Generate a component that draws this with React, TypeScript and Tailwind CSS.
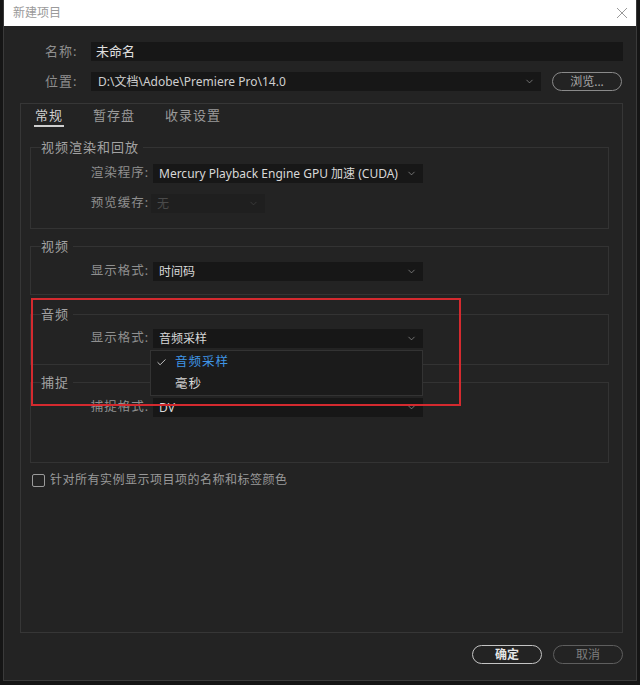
import { ChevronDown, Check } from "lucide-react";

const font = "font-['Noto_Sans','Noto_Sans_CJK_SC',sans-serif]";

const Dropdown = ({ value, width = "w-[270px]", dim = false }: { value: string; width?: string; dim?: boolean }) => (
    <div className={`${width} h-[19px] flex flex-row items-center justify-between pl-[6px] pr-[6px] ${dim ? "bg-[#1f1f1f]" : "bg-[#171717]"}`}>
        <span className={`text-[12px] leading-none ${dim ? "text-[#4a4a4a]" : "text-[#d8d8d8]"}`}>{value}</span>
        <ChevronDown size={11} strokeWidth={1.5} className={dim ? "text-[#444]" : "text-[#9a9a9a]"} />
    </div>
);

const Row = ({ label, children }: { label: string; children: React.ReactNode }) => (
    <div className="flex flex-row items-center gap-[4px]">
        <label className="w-[108px] text-right text-[12.5px] text-[#8f8f8f] tracking-[1px]">{label}</label>
        {children}
    </div>
);

const Section = ({ title, className, children }: { title: string; className: string; children: React.ReactNode }) => (
    <fieldset className={`border border-[#333333] px-[10px] ${className}`}>
        <legend className="text-[13px] leading-[16px] text-[#a2a2a2] pr-[4px] tracking-[1px]">{title}</legend>
        <div className="flex flex-col gap-[11px]">{children}</div>
    </fieldset>
);

const App = () => {
    return (
        <div className={`relative w-[640px] h-[685px] bg-[#151515] ${font}`}>
            <div className="ml-[3px] w-[634px] h-[681px] flex flex-col bg-[#232323] border-x border-b border-[#3a3a3a]">
                {/* title bar */}
                <div className="h-[26px] bg-white flex flex-row items-center justify-between pl-[9px] pr-[8px]">
                    <span className="text-[12px] text-[#9a9a9a]">新建项目</span>
                    <svg width="12" height="12" viewBox="0 0 12 12" className="text-[#9a9a9a]">
                        <path d="M1 1 L11 11 M11 1 L1 11" stroke="currentColor" strokeWidth="1" />
                    </svg>
                </div>

                <div className="flex flex-col pl-[16px] pr-[13px] pt-[16px]">
                    <div className="flex flex-row items-center gap-[4px] h-[19px]">
                        <label className="w-[67px] pl-[25px] text-[13px] text-[#8f8f8f] tracking-[1px]">名称:</label>
                        <div className="flex-1 h-[19px] bg-[#171717] flex items-center pl-[5px] text-[13px] text-[#e0e0e0]">未命名</div>
                    </div>
                    <div className="flex flex-row items-center gap-[4px] h-[19px] mt-[11px]">
                        <label className="w-[67px] pl-[25px] text-[13px] text-[#8f8f8f] tracking-[1px]">位置:</label>
                        <div className="w-[450px] h-[19px] bg-[#171717] flex flex-row items-center justify-between pl-[7px] pr-[6px]">
                            <span className="text-[12px] text-[#cfcfcf]">D:\文档\Adobe\Premiere Pro\14.0</span>
                            <ChevronDown size={11} strokeWidth={1.5} className="text-[#9a9a9a]" />
                        </div>
                        <button className="ml-[7px] w-[70px] h-[19px] rounded-full border border-[#8a8a8a] text-[12px] text-[#a8a8a8] leading-none">浏览...</button>
                    </div>

                    {/* main panel */}
                    <div className="mt-[12px] h-[530px] border border-[#363636] flex flex-col pl-[9px] pr-[13px]">
                        <div className="flex flex-row gap-[29px] pl-[4px] pt-[3px] text-[13px] leading-[16px] tracking-[1px]">
                            <span className="text-[#d0d0d0] border-b-2 border-[#cfcfcf] pb-[2px] px-[1px]">常规</span>
                            <span className="text-[#9a9a9a]">暂存盘</span>
                            <span className="text-[#9a9a9a] ml-[1px]">收录设置</span>
                        </div>

                        <Section title="视频渲染和回放" className="mt-[12px] pt-[9px] pb-[15px]">
                            <Row label="渲染程序:">
                                <Dropdown value="Mercury Playback Engine GPU 加速 (CUDA)" />
                            </Row>
                            <Row label="预览缓存:">
                                <Dropdown value="无" width="w-[114px] -ml-[2px]" dim />
                            </Row>
                        </Section>

                        <Section title="视频" className="mt-[9px] pt-[8px] pb-[13px]">
                            <Row label="显示格式:">
                                <Dropdown value="时间码" />
                            </Row>
                        </Section>

                        <Section title="音频" className="mt-[11px] pt-[7px] pb-[16px]">
                            <Row label="显示格式:">
                                <Dropdown value="音频采样" />
                            </Row>
                        </Section>

                        <Section title="捕捉" className="mt-[9px] pt-[8px] pb-[45px]">
                            <Row label="捕捉格式:">
                                <Dropdown value="DV" />
                            </Row>
                        </Section>

                        <label className="mt-[8px] ml-[2px] flex flex-row items-center gap-[5px]">
                            <span className="w-[13px] h-[13px] border-[1.5px] border-[#9a9a9a] rounded-[2px]" />
                            <span className="text-[12px] text-[#9a9a9a] tracking-[0.5px]">针对所有实例显示项目项的名称和标签颜色</span>
                        </label>
                    </div>

                    <div className="flex flex-row justify-end gap-[11px] mt-[12px]">
                        <button className="w-[70px] h-[19px] rounded-full border-[1.5px] border-[#c4c4c4] text-[12px] leading-none text-[#e6e6e6] font-bold">确定</button>
                        <button className="w-[70px] h-[19px] rounded-full border-[1.5px] border-[#5e5e5e] text-[12px] leading-none text-[#7e7e7e]">取消</button>
                    </div>
                </div>
            </div>

            {/* open dropdown menu */}
            <div className="absolute left-[150px] top-[350px] w-[273px] h-[46px] bg-[#1b1b1b] border border-[#333] flex flex-col justify-center gap-[4px] text-[12.5px] leading-[18px]">
                <div className="flex flex-row items-center">
                    <Check size={11} strokeWidth={2} className="ml-[5px] mr-[8px] text-[#d0d0d0]" />
                    <span className="text-[#3f95e6] tracking-[1px]">音频采样</span>
                </div>
                <span className="pl-[24px] text-[#d8d8d8] tracking-[1px]">毫秒</span>
            </div>

            {/* red annotation box */}
            <div className="absolute left-[31px] top-[298px] w-[430px] h-[108px] border-2 border-[#d42a2f]" />
        </div>
    );
};

export default App;
